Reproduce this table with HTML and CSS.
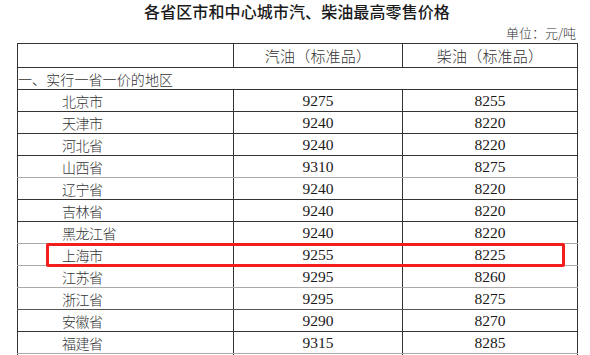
FILE: index.html
```html
<!DOCTYPE html>
<html lang="zh-CN">
<head>
    <meta charset="UTF-8">
    <title>各省区市和中心城市汽、柴油最高零售价格</title>
    <link rel="stylesheet" href="styles.css">
</head>
<body>
    <div class="sheet">
        <h1 class="title">各省区市和中心城市汽、柴油最高零售价格</h1>
        <div class="unit">单位：元/吨</div>

        <div class="table-wrap">
            <table class="price-table">
                <colgroup>
                    <col class="col-name">
                    <col class="col-gas">
                    <col class="col-diesel">
                </colgroup>
                <tr class="head-row">
                    <th></th>
                    <th>汽油（标准品）</th>
                    <th>柴油（标准品）</th>
                </tr>
                <tr class="group-row">
                    <td colspan="3">一、实行一省一价的地区</td>
                </tr>
                <tr><td class="name">北京市</td><td class="num">9275</td><td class="num">8255</td></tr>
                <tr><td class="name">天津市</td><td class="num">9240</td><td class="num">8220</td></tr>
                <tr><td class="name">河北省</td><td class="num">9240</td><td class="num">8220</td></tr>
                <tr class="light"><td class="name">山西省</td><td class="num">9310</td><td class="num">8275</td></tr>
                <tr><td class="name">辽宁省</td><td class="num">9240</td><td class="num">8220</td></tr>
                <tr><td class="name">吉林省</td><td class="num">9240</td><td class="num">8220</td></tr>
                <tr class="light"><td class="name">黑龙江省</td><td class="num">9240</td><td class="num">8220</td></tr>
                <tr class="light"><td class="name">上海市</td><td class="num">9255</td><td class="num">8225</td></tr>
                <tr class="light"><td class="name">江苏省</td><td class="num">9295</td><td class="num">8260</td></tr>
                <tr class="mid"><td class="name">浙江省</td><td class="num">9295</td><td class="num">8275</td></tr>
                <tr><td class="name">安徽省</td><td class="num">9290</td><td class="num">8270</td></tr>
                <tr class="light"><td class="name">福建省</td><td class="num">9315</td><td class="num">8285</td></tr>
                <tr class="next-row"><td></td><td></td><td></td></tr>
            </table>
            <!-- highlight box drawn over the 上海市 row -->
            <div class="highlight"></div>
        </div>
    </div>
</body>
</html>
```

FILE: styles.css
```css
body {
    margin: 0;
    background: #ffffff;
    color: #222;
    font-family: "Noto Sans CJK SC", sans-serif;
    overflow: hidden;
}
.sheet {
    padding: 0 13px 0 17px;
}
.title {
    margin: 0;
    height: 22px;
    line-height: 22px;
    font-size: 16px;
    font-weight: 500;
    text-align: center;
    letter-spacing: 0.1px;
    color: #1a1a1a;
}
.unit {
    margin-top: 1px;
    height: 20px;
    line-height: 20px;
    font-size: 13px;
    font-weight: 300;
    text-align: right;
    padding-right: 1px;
    color: #333;
}
.table-wrap {
    position: relative;
}
.price-table {
    border-collapse: collapse;
    table-layout: fixed;
    width: 560px;
}
.col-name { width: 216px; }
.col-gas { width: 169px; }
.col-diesel { width: 175px; }
.price-table th,
.price-table td {
    border: 1px solid #333;
    padding: 0;
    height: 21px;
    line-height: 20px;
    vertical-align: middle;
}
.price-table td:nth-child(2) {
    border-left-color: #111;
}
.price-table td:nth-child(3) {
    border-left-color: #999;
}
.head-row th {
    height: 23px;
    font-size: 15px;
    font-weight: 300;
    color: #333;
    text-align: center;
    letter-spacing: 0.2px;
}
.head-row th:nth-child(3) {
    border-left-color: #999;
}
.group-row td {
    font-size: 14px;
    font-weight: 300;
    color: #333;
    padding-left: 0;
    letter-spacing: 0.1px;
}
.name {
    padding-left: 44px !important;
    font-size: 14px;
    font-weight: 300;
    color: #333;
    letter-spacing: -0.5px;
}
.num {
    font-family: "Liberation Serif", "Noto Sans CJK SC", serif;
    font-size: 15.5px;
    text-align: center;
    color: #1a1a1a;
}
.light td {
    border-bottom-color: #aaa;
}
.mid td {
    border-bottom-color: #555;
}
.highlight {
    position: absolute;
    left: 29px;
    top: 200px;
    width: 513px;
    height: 18px;
    border: 3px solid #f21d1d;
    border-radius: 2px;
}
```
